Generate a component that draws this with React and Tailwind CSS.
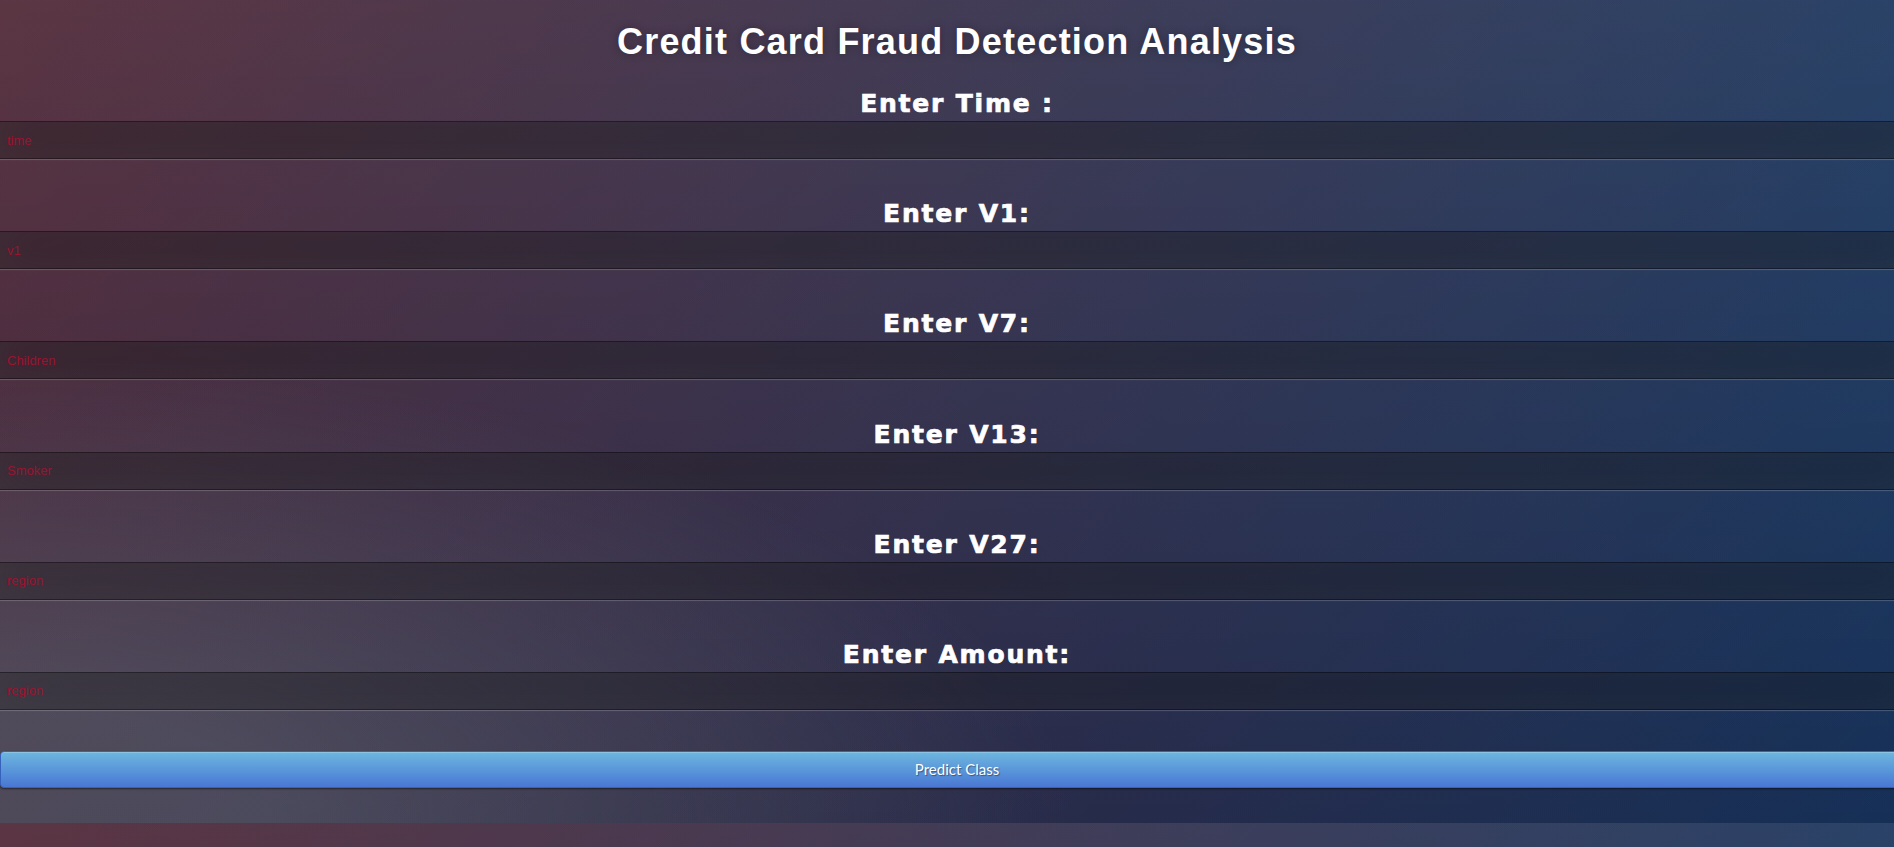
import React from "react";

const fields = [
    { label: "Enter Time :", name: "time", placeholder: "time" },
    { label: "Enter V1:", name: "v1", placeholder: "v1" },
    { label: "Enter V7:", name: "v7", placeholder: "Children" },
    { label: "Enter V13:", name: "v13", placeholder: "Smoker" },
    { label: "Enter V27:", name: "v27", placeholder: "region" },
    { label: "Enter Amount:", name: "amount", placeholder: "region" },
];

function App() {
    return (
        // page with the repeating gradient background
        <div className="h-screen overflow-hidden bg-[#092756] bg-[image:radial-gradient(ellipse_at_0%_100%,rgba(104,128,138,.4)_10%,rgba(138,114,76,0)_40%),linear-gradient(to_bottom,rgba(57,173,219,.25)_0%,rgba(42,60,87,.4)_100%),linear-gradient(135deg,#670d10_0%,#092756_100%)] bg-[length:100%_823px] bg-repeat">
            <div className="-ml-[4px] w-[calc(100%+28px)] pt-[22px]">

                {/* title */}
                <h1 className="h-[40px] text-center text-[36px] leading-[40px] font-bold tracking-[1.2px] text-white font-['Liberation_Sans',Arial,sans-serif] [text-shadow:0_0_10px_rgba(0,0,0,0.3)]">
                    Credit Card Fraud Detection Analysis
                </h1>

                {/* form */}
                <form className="flex flex-col">
                    {fields.map((f, i) => (
                        <div key={f.name} className={i === 0 ? "mt-[27px]" : "mt-[40.2px]"}>
                            <div className="h-[30px] text-center text-[25px] leading-[30px] font-bold tracking-[1.8px] text-white font-['DejaVu_Sans',Verdana,sans-serif] [-webkit-text-stroke:0.7px_white]">
                                {f.label}
                            </div>
                            <input
                                type="text"
                                name={f.name}
                                placeholder={f.placeholder}
                                className="mt-[2px] block h-[38px] w-full rounded-[4px] border border-black/30 bg-black/30 px-[10px] text-[13px] text-white outline-none font-['Liberation_Sans',Arial,sans-serif] placeholder:text-[#9a1430] shadow-[inset_0_-5px_45px_rgba(100,100,100,0.2),0_1px_1px_rgba(255,255,255,0.2)]"
                            />
                        </div>
                    ))}

                    {/* submit */}
                    <div className="mx-[4px] mt-[41px]">
                        <button
                            type="button"
                            className="block h-[37px] w-full rounded-[4px] border border-[#3762bc] bg-[#4a77d4] bg-gradient-to-b from-[#6eb6de] to-[#4a77d4] text-[15px] text-white font-['Lato',sans-serif] [text-shadow:1px_1px_1px_rgba(0,0,0,0.4)] shadow-[inset_0_1px_0_rgba(255,255,255,0.2),0_1px_2px_rgba(0,0,0,0.5)]"
                        >
                            Predict Class
                        </button>
                    </div>
                </form>
            </div>
        </div>
    );
}

export default App;
